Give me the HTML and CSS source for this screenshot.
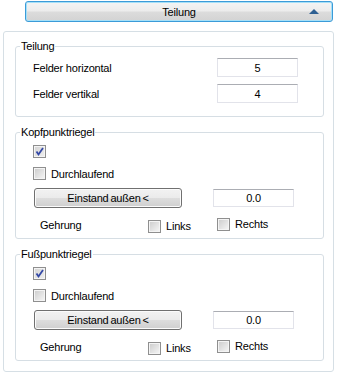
FILE: index.html
```html
<!DOCTYPE html>
<html>
  <head>
    <meta charset="UTF-8">
    <title>Teilung</title>
    <link rel="stylesheet" href="styles.css">
  </head>
  <body>
    <!-- Header toggle -->
    <div class="header">
      <button class="toggle">
        <span class="toggle-spacer"></span>
        <span class="toggle-text">Teilung</span>
        <svg class="toggle-arrow" width="10" height="5" viewBox="0 0 10 5"><polygon points="0,5 5,0 10,5" fill="#2d5f92"/></svg>
      </button>
    </div>

    <div class="panel">
      <!-- Teilung -->
      <fieldset class="group">
        <legend>Teilung</legend>
        <div class="body body-split">
          <div class="field-row"><span>Felder horizontal</span><input class="num num-wide" value="5"></div>
          <div class="field-row"><span>Felder vertikal</span><input class="num num-wide" value="4"></div>
        </div>
      </fieldset>

      <!-- Kopfpunktriegel -->
      <fieldset class="group group-next">
        <legend>Kopfpunktriegel</legend>
        <div class="body">
          <div class="check-row"><span class="box checked"><svg width="11" height="11" viewBox="0 0 11 11"><path d="M2.5 5.5 L4.5 8.5 L9 2" stroke="#3348a6" stroke-width="1.8" fill="none"/></svg></span></div>
          <div class="check-row row-gap"><span class="box"></span><span class="check-label">Durchlaufend</span></div>
          <div class="action-row"><button class="btn">Einstand außen &lt;</button><input class="num" value="0.0"></div>
          <div class="miter-row">
            <span class="miter-label">Gehrung</span>
            <span class="opt opt-links"><span class="box"></span><span class="check-label">Links</span></span>
            <span class="opt"><span class="box"></span><span class="check-label">Rechts</span></span>
          </div>
        </div>
      </fieldset>

      <!-- Fußpunktriegel -->
      <fieldset class="group group-next">
        <legend>Fußpunktriegel</legend>
        <div class="body">
          <div class="check-row"><span class="box checked"><svg width="11" height="11" viewBox="0 0 11 11"><path d="M2.5 5.5 L4.5 8.5 L9 2" stroke="#3348a6" stroke-width="1.8" fill="none"/></svg></span></div>
          <div class="check-row row-gap"><span class="box"></span><span class="check-label">Durchlaufend</span></div>
          <div class="action-row"><button class="btn">Einstand außen &lt;</button><input class="num" value="0.0"></div>
          <div class="miter-row">
            <span class="miter-label">Gehrung</span>
            <span class="opt opt-links"><span class="box"></span><span class="check-label">Links</span></span>
            <span class="opt"><span class="box"></span><span class="check-label">Rechts</span></span>
          </div>
        </div>
      </fieldset>
    </div>
  </body>
</html>
```

FILE: styles.css
```css
body {
  margin: 0;
  background: #ffffff;
  color: #000000;
  font-family: "Liberation Sans", Arial, sans-serif;
  font-size: 11px;
  letter-spacing: -0.2px;
  line-height: 14px;
}
button, input {
  font: inherit;
  letter-spacing: inherit;
  color: inherit;
}

/* header toggle */
.header {
  padding: 1px 0 0 25px;
}
.toggle {
  display: grid;
  grid-template-columns: 1fr auto 1fr;
  align-items: center;
  width: 308px;
  height: 21px;
  margin: 0;
  padding: 0;
  border: 1px solid #3b9bd8;
  border-radius: 3px;
  box-shadow: inset 0 0 0 1px #a6e0f8;
  background: linear-gradient(#f4f4f4 0%, #ececec 48%, #dcdcdc 52%, #d3d3d3 100%);
}
.toggle-arrow {
  justify-self: end;
  margin-right: 13px;
  margin-top: -1px;
}

/* main panel */
.panel {
  margin: 9px 0 0 3px;
  width: 331px;
  box-sizing: border-box;
  border: 1px solid #d6dfe5;
  border-radius: 3px;
  padding: 7px 9px 10px 11px;
}
.group {
  margin: 0;
  padding: 0;
  min-width: 0;
  border: 1px solid #d6dee4;
  border-radius: 3px;
}
.group-next {
  margin-top: 8px;
}
legend {
  margin-left: 4px;
  padding: 0 1px;
  line-height: 14px;
}
.body {
  padding: 6px 0 6px 17px;
}
.body-split {
  padding: 5px 25px 13px 17px;
}

/* Teilung rows */
.field-row {
  display: flex;
  align-items: center;
  justify-content: space-between;
  height: 19px;
}
.field-row + .field-row {
  margin-top: 7px;
}

/* inputs */
.num {
  box-sizing: border-box;
  width: 81px;
  height: 18px;
  margin: 0 0 0 31px;
  padding: 0;
  text-align: center;
  border: 1px solid #e2e3ea;
  border-top-color: #abadb3;
  background: #ffffff;
}
.num-wide {
  height: 19px;
  margin: 0;
}

/* checkboxes */
.check-row {
  display: flex;
  align-items: center;
  height: 13px;
}
.row-gap {
  margin-top: 9px;
}
.box {
  display: inline-flex;
  align-items: center;
  justify-content: center;
  box-sizing: border-box;
  width: 13px;
  height: 13px;
  flex: none;
  border: 1px solid #8f8f8f;
  box-shadow: inset 0 0 0 1px #f4f4f4;
  background: linear-gradient(135deg, #cbcbcb, #f7f7f7);
}
.box.checked {
  background: linear-gradient(135deg, #d4d4d4, #efefef);
}
.check-label {
  margin-left: 5px;
}

/* button row */
.action-row {
  display: flex;
  align-items: center;
  margin-top: 8px;
  height: 20px;
}
.btn {
  box-sizing: border-box;
  width: 148px;
  height: 20px;
  margin: 0 0 0 1px;
  padding: 0;
  word-spacing: -1px;
  border: 1px solid #707070;
  border-radius: 3px;
  box-shadow: inset 0 0 0 1px #fbfbfb;
  background: linear-gradient(#f2f2f2 0%, #ebebeb 48%, #dddddd 52%, #cfcfcf 100%);
}

/* Gehrung row */
.miter-row {
  display: flex;
  align-items: flex-start;
  margin-top: 9px;
  height: 15px;
}
.miter-label {
  width: 108px;
  margin-left: 7px;
  margin-top: 1px;
}
.opt {
  display: flex;
  align-items: center;
}
.opt-links {
  width: 69px;
  margin-top: 2px;
}
```
